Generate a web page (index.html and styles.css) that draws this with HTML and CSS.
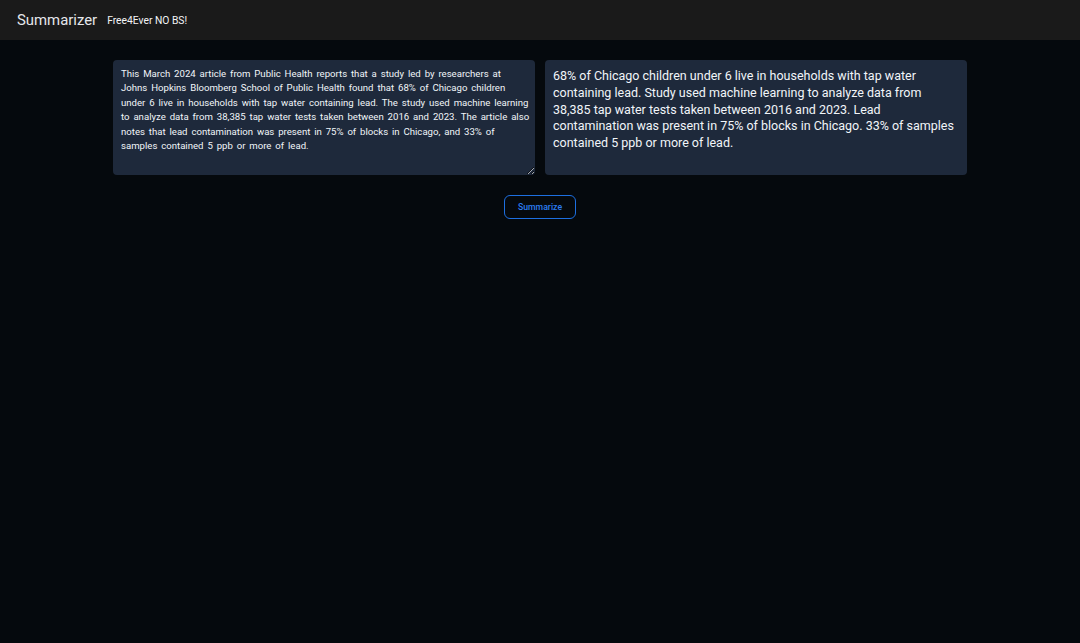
FILE: index.html
```html
<!DOCTYPE html>
<html lang="en">
<head>
<meta charset="utf-8">
<title>Summarizer</title>
<link rel="stylesheet" href="styles.css">
</head>
<body>
<header class="topbar">
  <span class="brand">Summarizer</span>
  <span class="tagline">Free4Ever NO BS!</span>
</header>
<main class="main">
  <div class="panels">
    <textarea class="input">This March 2024 article from Public Health reports that a study led by researchers at Johns Hopkins Bloomberg School of Public Health found that 68% of Chicago children under 6 live in households with tap water containing lead. The study used machine learning to analyze data from 38,385 tap water tests taken between 2016 and 2023. The article also notes that lead contamination was present in 75% of blocks in Chicago, and 33% of samples contained 5 ppb or more of lead.</textarea>
    <div class="output">68% of Chicago children under 6 live in households with tap water containing lead. Study used machine learning to analyze data from 38,385 tap water tests taken between 2016 and 2023. Lead contamination was present in 75% of blocks in Chicago. 33% of samples contained 5 ppb or more of lead.</div>
  </div>
  <div class="actions">
    <button class="btn">Summarize</button>
  </div>
</main>
</body>
</html>
```
FILE: styles.css
```css
html, body {
  margin: 0;
  padding: 0;
  height: 100%;
}
body {
  background: #05090d;
  color: #e5e7eb;
  font-family: Roboto, "Noto Sans", sans-serif;
}
.topbar {
  height: 40px;
  background: #1a1a1a;
  display: flex;
  align-items: center;
  padding: 0 17px;
  gap: 10px;
  box-sizing: border-box;
}
.brand {
  font-size: 14.9px;
  color: #e5e7eb;
}
.tagline {
  font-size: 10.3px;
  color: #f3f4f6;
}
.main {
  padding-top: 20px;
}
.panels {
  width: 854px;
  margin: 0 auto;
  display: grid;
  grid-template-columns: 1fr 1fr;
  gap: 10px;
}
.input, .output {
  height: 115px;
  box-sizing: border-box;
  background: #1e293b;
  border: none;
  border-radius: 4px;
  color: #f1f5f9;
  font-family: Roboto, "Noto Sans", sans-serif;
  margin: 0;
}
.input {
  font-size: 9.6px;
  line-height: 14.4px;
  word-spacing: 1.5px;
  padding: 7px 5.4px 7px 8px;
  resize: vertical;
  outline: none;
  display: block;
  width: 100%;
}
.output {
  font-size: 12.5px;
  line-height: 16.8px;
  padding: 8px 8px 7px 8px;
}
.actions {
  display: flex;
  justify-content: center;
  padding-top: 20px;
}
.btn {
  width: 72px;
  height: 24px;
  box-sizing: border-box;
  background: transparent;
  border: 1.5px solid #1d6fe0;
  border-radius: 6px;
  color: #2b7cf0;
  font-family: Roboto, "Noto Sans", sans-serif;
  font-size: 8.7px;
  font-weight: 500;
  padding: 0;
  cursor: pointer;
}
```
